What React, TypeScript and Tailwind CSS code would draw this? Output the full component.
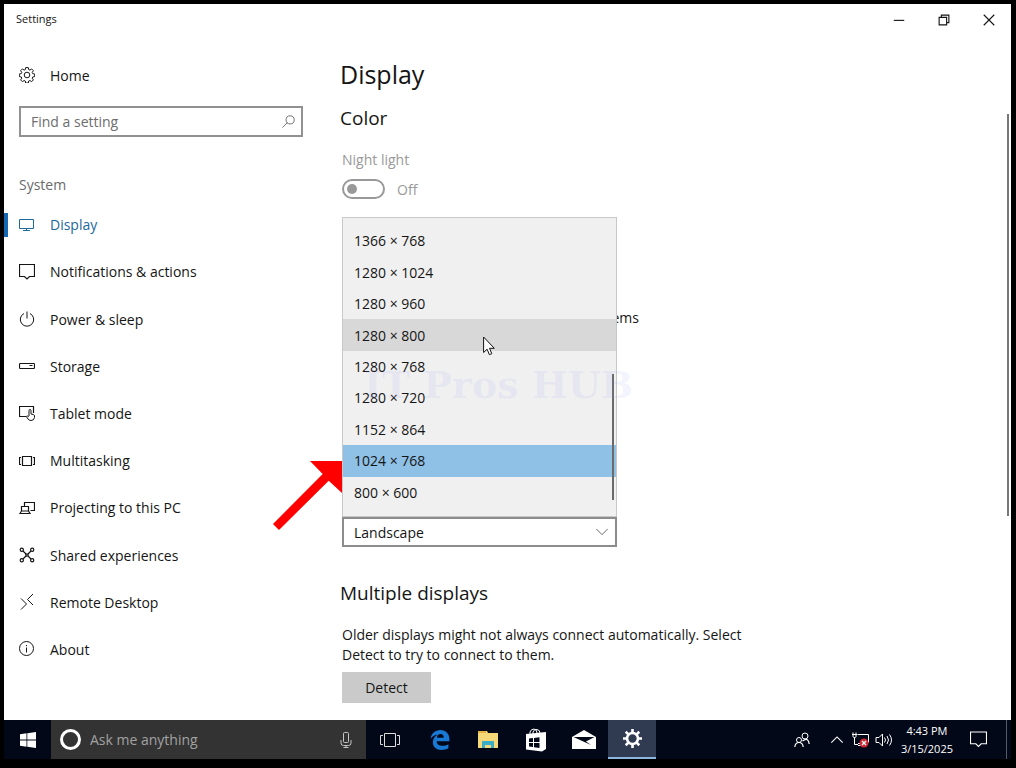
import React from "react";

type IconProps = { className?: string; children: React.ReactNode };

const Icon = ({ className = "size-4", children }: IconProps) => (
  <svg
    viewBox="0 0 16 16"
    className={`shrink-0 ${className}`}
    fill="none"
    stroke="currentColor"
    strokeWidth="1"
    aria-hidden="true"
  >
    {children}
  </svg>
);

// toothed ring of the Home link
const gearPath =
  "M6.7 .6h2.6l.4 2 1.2.5 1.7-1.2 1.8 1.8-1.2 1.7.5 1.2 2 .4v2.6l-2 .4-.5 1.2 1.2 1.7-1.8 1.8-1.7-1.2-1.2.5-.4 2H6.7l-.4-2-1.2-.5-1.7 1.2-1.8-1.8 1.2-1.7-.5-1.2-2-.4V7l2-.4.5-1.2-1.2-1.7 1.8-1.8 1.7 1.2 1.2-.5z";

const navItems = [
  {
    label: "Display",
    icon: (
      <Icon>
        <path d="M.5 2.5h14v9H.5zM7.5 11.5v2M4 13.5h7" />
      </Icon>
    ),
  },
  {
    label: "Notifications & actions",
    icon: (
      <Icon>
        <path d="M.5 .5h15v12h-5L8 15l-2.500-2.500h-5z" strokeWidth="1.200" />
      </Icon>
    ),
  },
  {
    label: "Power & sleep",
    icon: (
      <Icon>
        <path d="M8 .5v7M5 2.500a6.700 6.700 0 1 0 6 0" />
      </Icon>
    ),
  },
  {
    label: "Storage",
    icon: (
      <Icon>
        <rect x=".5" y="5.500" width="15" height="5" rx=".8" strokeWidth="1.200" />
        <path d="M10.500 7.500h3" />
      </Icon>
    ),
  },
  {
    label: "Tablet mode",
    icon: (
      <Icon>
        <path d="M7 11.500H.5v-10h14V8" strokeWidth="1.200" />
        <path d="M10 11V5.500a1 1 0 0 1 2 0V9l2.500.6q1 .4 1 1.400v1.500q-.5 3-3.500 3-2 0-3-1.500l-1.700-2.500q.7-1.200 2 0z" />
      </Icon>
    ),
  },
  {
    label: "Multitasking",
    icon: (
      <Icon>
        <path d="M3.500 3.500h9v9h-9zM2 4.500H.5v7H2M14 4.500h1.500v7H14" strokeWidth="1.200" />
      </Icon>
    ),
  },
  {
    label: "Projecting to this PC",
    icon: (
      <Icon>
        <path d="M5.500 6V2.500h10v8h-4M2.500 11V6.500h7V11M1 13.500h10L9.500 11h-7z" strokeWidth="1.200" />
      </Icon>
    ),
  },
  {
    label: "Shared experiences",
    icon: (
      <Icon>
        <g strokeWidth="1.200">
          <circle cx="2.800" cy="2.800" r="1.600" />
          <circle cx="13.200" cy="2.800" r="1.600" />
          <circle cx="2.800" cy="13.200" r="1.600" />
          <circle cx="13.200" cy="13.200" r="1.600" />
          <circle cx="8" cy="8" r="1.200" />
          <path d="M4 4l3 3M12 4L9 7M4 12l3-3M12 12L9 9" />
        </g>
      </Icon>
    ),
  },
  {
    label: "Remote Desktop",
    icon: (
      <Icon>
        <path d="M2 4.500l5.500 5.500L2 15.500M14 0L8.500 5.500 14 11" />
      </Icon>
    ),
  },
  {
    label: "About",
    icon: (
      <Icon>
        <circle cx="7.500" cy="7.500" r="7" />
        <path d="M7.500 6.500v5M7.500 4v1.200" />
      </Icon>
    ),
  },
];

const resolutions = [
  "1366 × 768",
  "1280 × 1024",
  "1280 × 960",
  "1280 × 800",
  "1280 × 768",
  "1280 × 720",
  "1152 × 864",
  "1024 × 768",
  "800 × 600",
];

const optionColor = (resolution: string) => {
  if (resolution === "1024 × 768") return "bg-[#8fc0e6]";
  if (resolution === "1280 × 800") return "bg-[#d8d8d8]";
  return "";
};

const TitleBar = () => (
  <header className="flex h-[31px] items-center justify-between">
    <h1 className="pl-3 text-[11px]">Settings</h1>
    <div className="flex h-full">
      <button aria-label="Minimize" className="flex w-[45px] items-center justify-center">
        <Icon className="size-3">
          <path d="M1 8.500h14" strokeWidth="1.500" />
        </Icon>
      </button>
      <button aria-label="Restore" className="flex w-[45px] items-center justify-center">
        <Icon className="size-3">
          <path d="M1.500 4.500h10v10h-10zM4.500 4V1.500h10v10H12" strokeWidth="1.500" />
        </Icon>
      </button>
      <button aria-label="Close" className="flex w-[45px] items-center justify-center">
        <Icon className="size-3">
          <path d="M1 1l14 14M15 1L1 15" strokeWidth="1.500" />
        </Icon>
      </button>
    </div>
  </header>
);

const Sidebar = () => (
  <aside className="w-[336px] shrink-0 pt-7">
    <a href="#home" className="flex h-6 items-center gap-[15px] pl-[15px]">
      <Icon>
        <path d={gearPath} />
        <circle cx="8" cy="8" r="2.800" />
      </Icon>
      Home
    </a>
    <div className="mt-[19px] mr-[37px] ml-[15px] flex h-[31px] items-center border-2 border-[#919191] pr-[6px] pl-[10px]">
      <input
        aria-label="Find a setting"
        placeholder="Find a setting"
        className="min-w-0 flex-1 outline-none placeholder:text-[#6d6d6d]"
      />
      <Icon className="size-[13px] text-[#555]">
        <circle cx="10" cy="6" r="5" />
        <path d="M6.500 9.500L.5 15.500" />
      </Icon>
    </div>
    <h2 className="mt-9 pl-[15px] leading-6 text-[#6a6a6a]">System</h2>
    <nav className="mt-1 flex h-[472px] flex-col">
      {navItems.map((item, index) => (
        <a
          key={item.label}
          href="#settings"
          className={`flex flex-1 items-center ${index === 0 ? "text-[#20699c]" : ""}`}
        >
          <span className={`h-6 w-1 ${index === 0 ? "bg-[#1668b2]" : ""}`} />
          <span className="flex items-center gap-[15px] pl-[11px]">
            {item.icon}
            {item.label}
          </span>
        </a>
      ))}
    </nav>
  </aside>
);

const ResolutionList = () => (
  <div className="absolute inset-0 flex flex-col border border-[#c8c8c8] bg-[#f0f0f0] pt-[7px] pb-2">
    <ul role="listbox" aria-label="Resolution" className="flex flex-1 flex-col">
      {resolutions.map((resolution) => (
        <li
          key={resolution}
          role="option"
          aria-selected={resolution === "1024 × 768"}
          className={`flex flex-1 items-center pl-[11px] ${optionColor(resolution)}`}
        >
          {resolution}
        </li>
      ))}
    </ul>
    <span className="absolute right-[2px] bottom-4 h-[126px] w-[2px] bg-[#6b6b6b]" />
    <span className="absolute top-[155px] left-[21px] font-['DejaVu_Serif'] text-[38px] leading-6 font-bold whitespace-nowrap text-[#8c8cff]/10">
      IT Pros HUB
    </span>
    <svg viewBox="0 0 12 20" className="absolute top-[118px] left-[140px] h-5 w-3" aria-hidden="true">
      <path d="M.6 1v15.500l3.500-3.300 2.300 5.500 2.400-1-2.300-5.400h4.800z" fill="#fff" stroke="#111" />
    </svg>
    <svg viewBox="0 0 72 72" className="absolute top-[242px] right-full size-[72px]" aria-hidden="true">
      <path d="M39 1h32v32L57.700 20.700 8 70 2 64 51.700 14z" fill="#f00" />
    </svg>
  </div>
);

const DisplayPage = () => (
  <main className="min-w-0 flex-1 pt-[19px]">
    <h2 className="text-[25px] leading-10">Display</h2>
    <h3 className="mt-1 text-[19px] leading-10">Color</h3>
    <div className="mt-[10px] pl-[2px] text-[#999]">
      <label htmlFor="night-light" className="block leading-6">
        Night light
      </label>
      <div className="mt-[7px] flex h-5 items-center gap-3">
        <input
          id="night-light"
          type="checkbox"
          role="switch"
          disabled
          className="h-5 w-[43px] appearance-none rounded-full border-2 border-[#999] before:mt-[3px] before:ml-[3px] before:block before:size-[10px] before:rounded-full before:bg-[#999]"
        />
        Off
      </div>
    </div>
    <div className="mt-[18px] ml-[2px] w-[275px]">
      <div className="relative h-[300px] pt-[91px]">
        <p className="w-[297px] text-right leading-5">items</p>
        <ResolutionList />
      </div>
      <div className="relative">
        <select
          aria-label="Orientation"
          className="block h-[30px] w-full appearance-none border-2 border-[#8c8c8c] bg-white px-[10px]"
        >
          <option>Landscape</option>
        </select>
        <Icon className="pointer-events-none absolute top-2 right-2 size-[14px] text-[#555]">
          <path d="M1.500 4.500L8 11l6.500-6.500" />
        </Icon>
      </div>
    </div>
    <h3 className="mt-[26px] text-[19px] leading-10">Multiple displays</h3>
    <p className="mt-3 ml-[2px] max-w-[412px] leading-5">
      Older displays might not always connect automatically. Select Detect to try to connect to them.
    </p>
    <button className="mt-[7px] ml-[2px] h-[31px] w-[89px] bg-[#cacaca]">Detect</button>
  </main>
);

const taskButton = "flex w-12 items-center justify-center";

const Taskbar = () => (
  <footer className="flex h-[39px] bg-[#020817] text-white">
    <button aria-label="Start" className="flex w-[47px] items-center justify-center">
      <svg viewBox="0 0 16 16" className="size-4" fill="currentColor" aria-hidden="true">
        <path d="M0 2.200l6.500-.9v6.200H0zM7.300 1.200L16 0v7.500H7.300zM0 8.400h6.500v6.300L0 13.800zM7.300 8.400H16V16l-8.700-1.200z" />
      </svg>
    </button>
    <div className="flex w-[315px] items-center gap-[9px] bg-[#333] pr-3 pl-[9px]">
      <span className="size-[21px] rounded-full border-[3px] border-white" />
      <input
        aria-label="Ask me anything"
        placeholder="Ask me anything"
        className="min-w-0 flex-1 outline-none placeholder:text-[#a2a2a2]"
      />
      <Icon className="size-4 text-[#c5c5c5]">
        <rect x="5.500" y=".5" width="5" height="10" rx="1" />
        <path d="M3 8v3q0 2.500 2.500 2.500h5q2.500 0 2.500-2.500V8M8 13.500V16M5.500 15.500h5" />
      </Icon>
    </div>
    <button aria-label="Task view" className="mr-[2px] flex w-12 items-center justify-center">
      <svg viewBox="0 0 20 16" className="h-4 w-5" fill="none" stroke="#ddd" aria-hidden="true">
        <path d="M4.500 1.500h11v13h-11zM3 3.500H.5v9H3M17 3.500h2.500v9H17" />
      </svg>
    </button>
    <button aria-label="Edge" className={taskButton}>
      <svg viewBox="0 0 20 20" className="size-5" fill="#1978d4" aria-hidden="true">
        <path d="M.6 9C1.200 3.500 5 0 10.300 0c5.800 0 9.100 4 9.100 9v2.200H6.700c.1 3.300 2.700 4.600 5.800 4.600 2.100 0 4.200-.6 5.900-1.600v4.100c-1.800 1.100-4.300 1.700-6.900 1.700C6.300 20 2.800 17 2.800 12.300c0-3.400 1.900-6.200 5-7.600C4.700 4.700 2 6.500.6 9zm6.300-1.300h6.900c0-2.100-1.100-3.700-3.300-3.700-2 0-3.300 1.500-3.600 3.700z" />
      </svg>
    </button>
    <button aria-label="File Explorer" className={taskButton}>
      <svg viewBox="0 0 22 19" className="h-[19px] w-[22px]" aria-hidden="true">
        <path d="M1 1h9l1 2h10v15H1z" fill="#f5d978" />
        <path d="M1 1h8v2H1z" fill="#e4b445" />
        <path d="M5 18v-6q0-1 1-1h10q1 0 1 1v6h-3v-3H8v3z" fill="#3badc7" />
      </svg>
    </button>
    <button aria-label="Store" className={taskButton}>
      <svg viewBox="0 0 22 24" className="h-6 w-[22px]" aria-hidden="true">
        <path d="M1 6l20-2v17l-4 2.500-16-2z" fill="#fff" />
        <path d="M5 6V4q1-3 4-3 3 .5 3 4M8 6V4q1-3 4-2.500Q15 2 15 5" fill="none" stroke="#fff" />
        <path d="M4 10.500l4-.5v4H4zM9 9.900l5.500-.7V14H9zM4 15h4v4l-4-.6zM9 15h5.500v5L9 19.200z" fill="#020817" />
      </svg>
    </button>
    <button aria-label="Mail" className={taskButton}>
      <svg viewBox="0 0 24 20" className="h-5 w-6" aria-hidden="true">
        <path d="M0 7L12 0l12 7v12H0z" fill="#fff" />
        <path d="M1.500 7h21L14 11.500l5 3.500z" fill="#020817" />
      </svg>
    </button>
    <button aria-label="Settings" className="flex w-12 items-center justify-center border-b-2 border-[#8ab6df] bg-[#303a50]">
      <Icon className="size-[19px]">
        <g strokeWidth="2.200">
          <circle cx="8" cy="8" r="4.600" />
          <path d="M8 0v3M8 13v3M0 8h3M13 8h3M2.300 2.300l2.200 2.200M11.500 11.500l2.200 2.200M2.300 13.700l2.200-2.200M11.500 4.500l2.200-2.200" />
        </g>
      </Icon>
    </button>
    <div className="ml-auto flex items-center">
      <button aria-label="People">
        <Icon>
          <circle cx="5" cy="8" r="2.500" />
          <circle cx="11" cy="4" r="3" />
          <path d="M.8 15q.5-4.500 4.200-4.500T9.200 15M8.500 9q5.500-4.500 6.700 3" strokeWidth="1.200" />
        </Icon>
      </button>
      <button aria-label="Show hidden icons" className="ml-5">
        <Icon className="size-[14px]">
          <path d="M1.500 11L8 4.500l6.500 6.500" strokeWidth="1.300" />
        </Icon>
      </button>
      <button aria-label="Network" className="ml-2">
        <svg viewBox="0 0 18 16" className="h-4 w-[18px]" fill="none" stroke="#fff" aria-hidden="true">
          <path d="M5.500 2.500h11v8M1 .5v4q0 1 1.500 1T4 4.500v-4M0 2.500h5M2.500 5.500v7H6M6 11.500h4M6 13.500h4" />
          <circle cx="12" cy="11" r="4.500" fill="#cf2430" stroke="none" />
          <path d="M10 9l4 4M14 9l-4 4" strokeWidth="1.300" />
        </svg>
      </button>
      <button aria-label="Volume" className="ml-[5px]">
        <svg viewBox="0 0 18 16" className="h-4 w-[18px]" fill="none" stroke="#fff" aria-hidden="true">
          <path d="M1 5.500h3L7.500 2v12L4 10.500H1zM9.500 5.500q2 2.500 0 5M12 4q3 4 0 8M14.500 2.500q4 5.500 0 11" />
        </svg>
      </button>
      <div className="ml-2 flex flex-col items-center text-[11px] leading-[18px]">
        <span>4:43 PM</span>
        <span>3/15/2025</span>
      </div>
      <button aria-label="Action center" className="ml-[17px]">
        <Icon className="size-[17px]">
          <path d="M.5 1h15v11h-5L8 14.500 5.500 12h-5z" />
        </Icon>
      </button>
      <span className="mr-1 ml-[19px] h-[39px] w-px bg-[#555b66]" />
    </div>
  </footer>
);

const App = () => {
  return (
    <div className="flex min-h-screen flex-col bg-black pt-1 pr-[5px] pb-[9px] pl-1 font-['Open_Sans','Noto_Sans',sans-serif] text-[14px] text-[#151515]">
      <div className="flex flex-1 flex-col bg-white">
        <TitleBar />
        <div className="flex flex-1 pr-[2px]">
          <Sidebar />
          <DisplayPage />
          <span className="mt-[79px] h-[402px] w-[2px] shrink-0 bg-[#777]" />
        </div>
      </div>
      <Taskbar />
    </div>
  );
};

export default App;
